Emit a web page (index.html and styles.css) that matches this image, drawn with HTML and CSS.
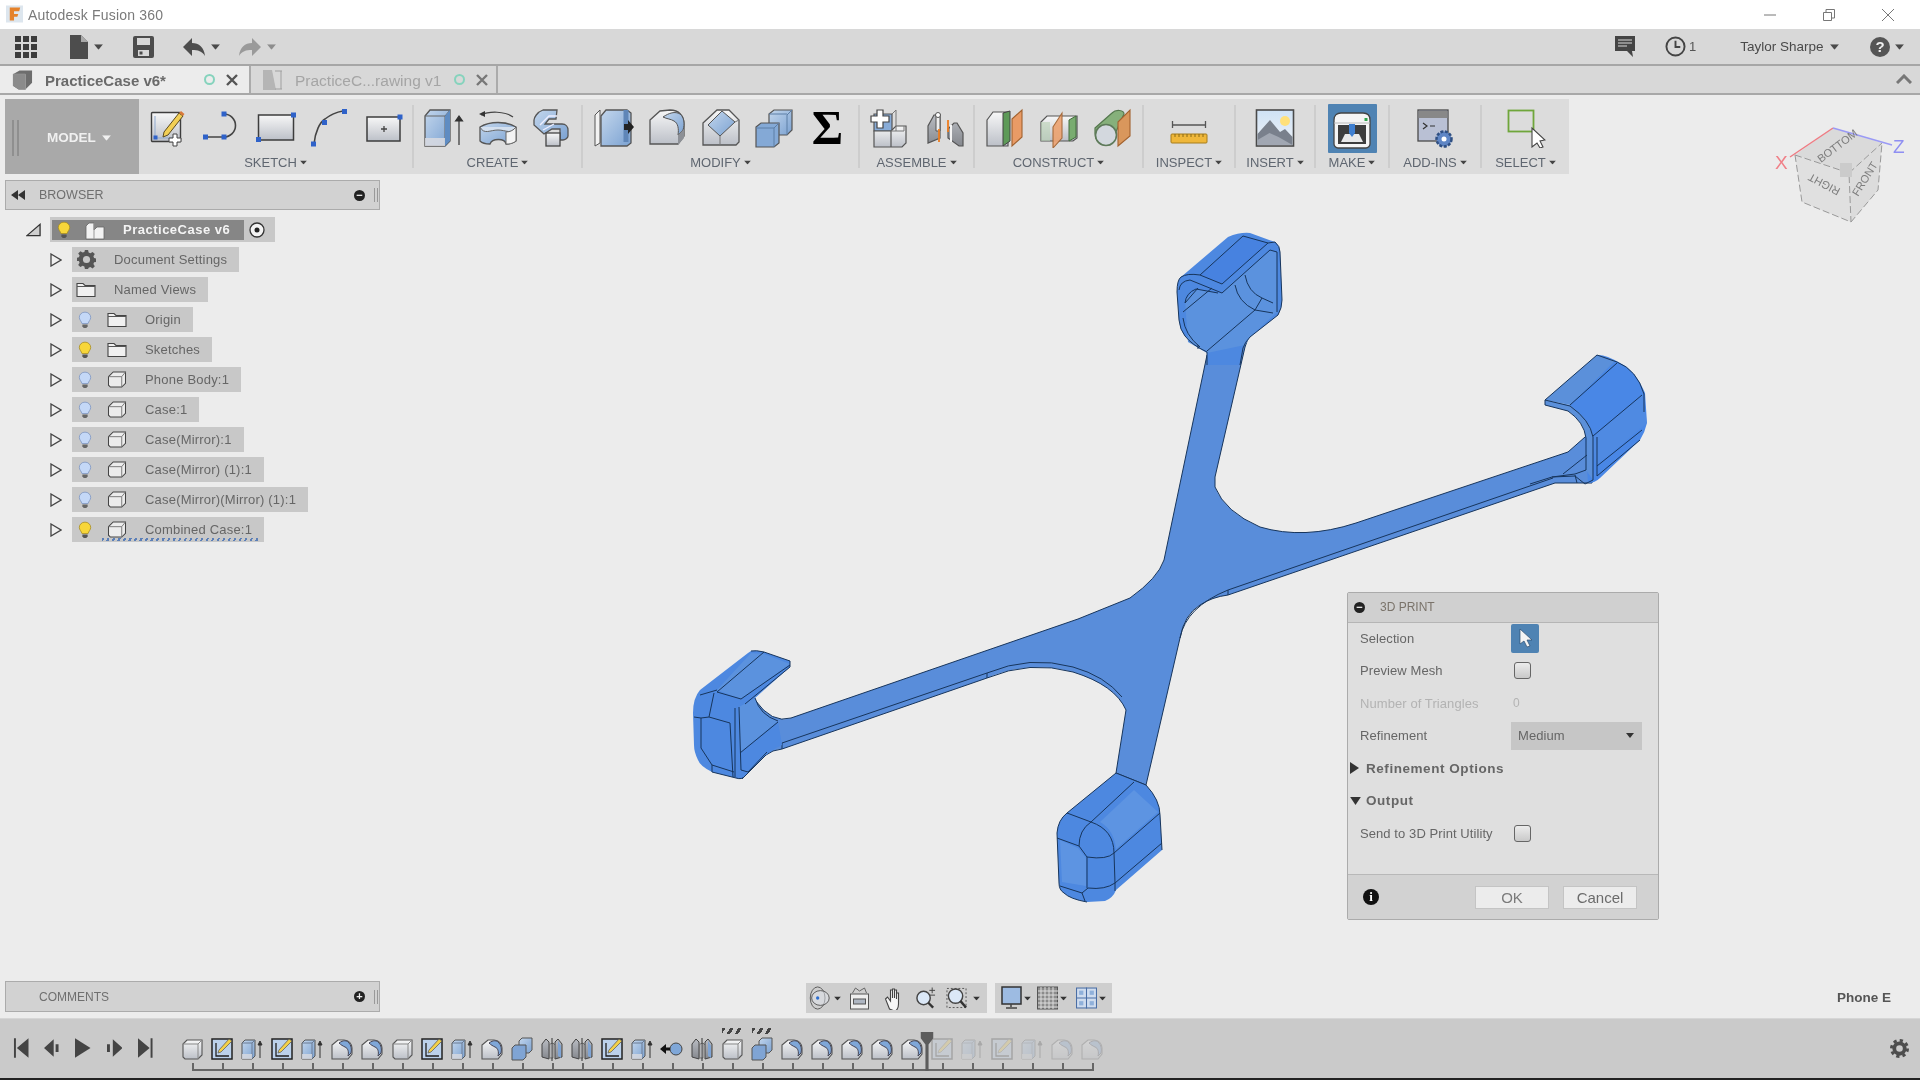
FILE: index.html
```html
<!DOCTYPE html>
<html lang="en">
<head>
<meta charset="utf-8">
<title>Autodesk Fusion 360</title>
<link rel="stylesheet" href="styles.css">
</head>
<body>
<svg class="defs" width="0" height="0" aria-hidden="true">
  <defs>
    <linearGradient id="gBlue" x1="0" y1="0" x2="1" y2="1"><stop offset="0" stop-color="#c3d6ec"/><stop offset="1" stop-color="#7ba2d2"/></linearGradient>
    <linearGradient id="gGrey" x1="0" y1="0" x2="0" y2="1"><stop offset="0" stop-color="#f7f7f7"/><stop offset="1" stop-color="#bcc0c8"/></linearGradient>
    <linearGradient id="gSide" x1="0" y1="0" x2="0" y2="1"><stop offset="0" stop-color="#b9bcc2"/><stop offset="1" stop-color="#85888e"/></linearGradient>
    <linearGradient id="gSky" x1="0" y1="0" x2="0" y2="1"><stop offset="0" stop-color="#cfe2f5"/><stop offset="1" stop-color="#eef2f7"/></linearGradient>

    <symbol id="i-sketch" viewBox="0 0 40 40">
      <rect x="3.5" y="4.5" width="29" height="29" rx="1" fill="url(#gGrey)" stroke="#3d3d3d" stroke-width="1.4"/>
      <path d="M7 8v22h22" fill="none" stroke="#8fa9cf" stroke-width="1"/>
      <rect x="5.5" y="27.5" width="4" height="4" fill="#2f62c9"/>
      <path d="M16 24l-1 5 5-2 15-19-4-3z" fill="#f2cf55" stroke="#5a4a20"/>
      <path d="M31 5l4 3 1.5-2-3.500-3z" fill="#d9793a"/>
      <path d="M25 26h4v4h4v4h-4v4h-4v-4h-4v-4h4z" fill="#fff" stroke="#444"/>
    </symbol>
    <symbol id="i-line" viewBox="0 0 40 40">
      <path d="M4 29h18a11.5 11.5 0 0 0 0-23" fill="none" stroke="#444" stroke-width="1.6"/>
      <g fill="#2f62c9"><rect x="1" y="26.5" width="5" height="5"/><rect x="19.5" y="26.5" width="5" height="5"/><rect x="19.5" y="3.5" width="5" height="5"/></g>
    </symbol>
    <symbol id="i-rect" viewBox="0 0 40 40">
      <rect x="2.5" y="7" width="35" height="25" fill="url(#gGrey)" stroke="#3d3d3d" stroke-width="1.5"/>
      <g fill="#2f62c9"><rect x="0" y="29" width="5" height="5"/><rect x="35" y="4.5" width="5" height="5"/></g>
    </symbol>
    <symbol id="i-arc" viewBox="0 0 40 40">
      <path d="M4 36c1-12 6-22 11-25 5-4 12-7 18-8" fill="none" stroke="#444" stroke-width="1.6"/>
      <g fill="#2f62c9"><rect x="1" y="33.5" width="5" height="5"/><rect x="12" y="12" width="5" height="5"/><rect x="32" y="1" width="5" height="5"/></g>
    </symbol>
    <symbol id="i-point" viewBox="0 0 40 40">
      <rect x="3" y="9" width="33" height="24" fill="url(#gGrey)" stroke="#3d3d3d" stroke-width="1.5"/>
      <path d="M17 21h6M20 18v6" stroke="#444" stroke-width="1.3"/>
      <rect x="33.5" y="6.5" width="5" height="5" fill="#2f62c9"/>
    </symbol>
    <symbol id="i-extrude" viewBox="0 0 40 40">
      <path d="M1 8l5-6h20v31l-5 5H1z" fill="url(#gBlue)" stroke="#555" stroke-width="1.3"/>
      <path d="M1 8h25M21 8v30M21 8l5-6" fill="none" stroke="#666"/>
      <path d="M21 8l5-6v31l-5 5z" fill="#5f8cc2"/>
      <rect x="1" y="30" width="20" height="8" fill="#d9dbe0" opacity=".85"/>
      <path d="M35 37V10M31.5 13l3.5-5 3.5 5z" fill="#333" stroke="#333" stroke-width="1.2"/>
    </symbol>
    <symbol id="i-revolve" viewBox="0 0 40 40">
      <path d="M3 7c8-4 24-4 32 2" fill="none" stroke="#444" stroke-width="1.2"/><path d="M1 6l6-3v6z" fill="#333"/>
      <path d="M2 19c10-6 26-6 36 0v14c-4 3-7 3-10 3-1-6-14-6-16 0-3 0-7 0-10-3z" fill="url(#gBlue)" stroke="#555" stroke-width="1.3"/>
      <path d="M2 19c4 8 10 3 18 3s14 5 18-3" fill="#d4e0ef" stroke="#666"/>
      <path d="M28 24c4 0 8-2 10-5v14c-4 3-7 3-10 3z" fill="#f3f3f3" stroke="#666"/>
    </symbol>
    <symbol id="i-sweep" viewBox="0 0 40 40">
      <path d="M3 12c0-2 3-8 9-10h14l-1 9h-7l-4 5h17c4 0 6 3 6 6v6c0 2-3 4-5 4h-3V21h-8l-8 5-10-9z" fill="url(#gBlue)" stroke="#555" stroke-width="1.3"/>
      <path d="M9 17l9-9h8M12 22l11-6" fill="none" stroke="#eef" stroke-width="1.4"/>
      <rect x="15" y="25" width="14" height="13" fill="url(#gGrey)" stroke="#444" stroke-width="1.3"/>
    </symbol>
    <symbol id="i-press" viewBox="0 0 40 40">
      <path d="M1 7l5-5v33l-5 3z" fill="#f2f2f2" stroke="#555"/>
      <path d="M7 8l5-6h21l4 3v30l-4 3H7z" fill="url(#gBlue)" stroke="#555" stroke-width="1.3"/>
      <path d="M32 2v32" stroke="#5f86b8" stroke-width="5"/>
      <path d="M30 16h4v-4l6 7-6 7v-4h-4z" fill="#222"/>
    </symbol>
    <symbol id="i-fillet" viewBox="0 0 40 40">
      <path d="M3 12L13 3l10-1c9 0 14 6 14 14v12l-6 8H3z" fill="url(#gGrey)" stroke="#555" stroke-width="1.3"/>
      <path d="M16 9c6-4 12-6 17-3 4 3 5 10 3 16l-5 5c1-6 0-12-4-14-3-2-7-2-11-4z" fill="url(#gBlue)" stroke="#555"/>
      <path d="M31 27l6-6v9l-6 7z" fill="#8d9096"/>
    </symbol>
    <symbol id="i-chamfer" viewBox="0 0 40 40">
      <path d="M2 15L16 2h12l10 10v22l-3 3H2z" fill="url(#gGrey)" stroke="#555" stroke-width="1.3"/>
      <path d="M7 17L21 3l13 11-15 14z" fill="url(#gBlue)" stroke="#555"/>
      <path d="M19 28v9M34 14l4-2" stroke="#777"/>
    </symbol>
    <symbol id="i-combine" viewBox="0 0 40 40">
      <path d="M15 6l5-4h18v20l-5 5h-18z" fill="url(#gBlue)" stroke="#555" stroke-width="1.2"/>
      <path d="M2 19l5-4h18v20l-5 4H2z" fill="#84a9d6" stroke="#555" stroke-width="1.2"/>
      <path d="M33 7v20M33 7l5-5M15 6h18M20 20v19M20 20l5-5M2 20h18" fill="none" stroke="#5d7ea6"/>
    </symbol>
    <symbol id="i-newcomp" viewBox="0 0 40 40">
      <path d="M5 6h18v17H5z" fill="#88acd8" stroke="#555" stroke-width="1.2"/>
      <path d="M5 23h17v16H5zM22 23l5-5h10v17l-4 4H22z" fill="url(#gGrey)" stroke="#555" stroke-width="1.2"/>
      <path d="M23 6l4-4v21M22 23h13v-5" fill="none" stroke="#777"/>
      <path d="M8 2h6v6h6v6h-6v6H8v-6H2V8h6z" fill="#fff" stroke="#444" stroke-width="1.2"/>
    </symbol>
    <symbol id="i-joint" viewBox="0 0 40 40">
      <path d="M4 35V18l6-11h6v23zM24 21l6-6 3 0 6 10v13l-4 0-11-8z" fill="url(#gSide)" stroke="#555" stroke-width="1.2"/>
      <path d="M12 6h4v17h-4z" fill="#eee" stroke="#555"/><circle cx="14" cy="7" r="2.5" fill="#fff" stroke="#555"/>
      <path d="M15 34V21M24 24v-12" stroke="#ee7d1f" stroke-width="1.8"/>
      <path d="M27 17v17" stroke="#f4f4f4" stroke-width="2"/>
    </symbol>
    <symbol id="i-offset" viewBox="0 0 40 40">
      <path d="M2 12l6-8h15v34H2z" fill="url(#gGrey)" stroke="#555" stroke-width="1.2"/>
      <path d="M18 5l7-2v30l-7 5z" fill="#5d9a58" stroke="#444"/>
      <path d="M27 11l10-9v27l-10 9z" fill="#e99b66" stroke="#a2622f" stroke-width="1.1"/>
    </symbol>
    <symbol id="i-mid" viewBox="0 0 40 40">
      <path d="M2 14l6-6h30v22l-4 3H2z" fill="url(#gGrey)" stroke="#555" stroke-width="1.2"/>
      <path d="M30 12l7-4v21l-7 4z" fill="#79ac70" stroke="#436d3c"/><path d="M2 14h9v19H2z" fill="#b9d2b4" opacity=".6"/>
      <path d="M14 19l9-14v25l-9 10z" fill="#eca373" stroke="#a2622f" stroke-width="1.1" opacity=".92"/>
    </symbol>
    <symbol id="i-tan" viewBox="0 0 40 40">
      <path d="M3 20L20 5c4-4 12-3 12 1L18 37H13C6 37 3 31 3 25z" fill="#86b07b" stroke="#55784e" stroke-width="1.2"/>
      <circle cx="14" cy="27" r="10.5" fill="#d3d8de" stroke="#5e7a5a" stroke-width="1.6"/>
      <path d="M26 14l12-12v26L26 38z" fill="#d9975c" stroke="#a2622f" stroke-width="1.1"/>
    </symbol>
    <symbol id="i-ruler" viewBox="0 0 40 40">
      <path d="M3 17h34M3.5 13v7M36.5 13v7" stroke="#555" stroke-width="1.3"/>
      <rect x="2" y="26" width="36" height="9" rx="1" fill="#efb73a" stroke="#a67c1a"/>
      <path d="M6 26v3M10 26v3M14 26v3M18 26v3M22 26v3M26 26v3M30 26v3M34 26v3" stroke="#8a6a14"/>
    </symbol>
    <symbol id="i-insert" viewBox="0 0 40 40">
      <rect x="1.5" y="2" width="37" height="36" fill="url(#gSky)" stroke="#4a4a4a" stroke-width="1.6"/>
      <circle cx="30" cy="13" r="5" fill="#ffe07a"/>
      <path d="M2.5 37V26L15 12l10 12 5-3 7.5 8v8z" fill="#79808c"/><path d="M2.5 37v-5l12-7 9 4 14 8z" fill="#a1a7b2"/>
    </symbol>
    <symbol id="i-make" viewBox="0 0 40 40">
      <path d="M2 11c0-5 3-7 7-7h22c4 0 7 2 7 7v24c0 2-2 4-4 4H6c-2 0-4-2-4-4z" fill="#f5f5f5" stroke="#444" stroke-width="1.3"/>
      <path d="M2 14h36" stroke="#bbb"/><rect x="32.5" y="9" width="3" height="3" fill="#2fa34a"/>
      <rect x="6" y="16" width="28" height="19" fill="#3d3d3d"/>
      <path d="M9 33l4-8h14l4 8z" fill="#e9e9e9"/>
      <path d="M17 15h6v9l-3 4-3-4z" fill="#3f7fd0"/>
    </symbol>
    <symbol id="i-addins" viewBox="0 0 40 40">
      <rect x="3" y="2" width="30" height="31" fill="#b9c0d4" stroke="#4a4a4a" stroke-width="1.3"/>
      <rect x="3.5" y="3" width="29" height="7" fill="#888"/>
      <path d="M8 15l4 3-4 3M15 18h5" fill="none" stroke="#333" stroke-width="1.2"/>
      <circle cx="29" cy="31" r="7.5" fill="#5f86c5" stroke="#2f4f82" stroke-width="2.5" stroke-dasharray="3 1.5"/>
      <circle cx="29" cy="31" r="2.5" fill="#fff"/>
    </symbol>
    <symbol id="i-select" viewBox="0 0 40 40">
      <rect x="2.5" y="2.5" width="25" height="21" fill="none" stroke="#6fa63b" stroke-width="1.8"/>
      <path d="M26 20v19l5-4 3 5 3-1-3-6 5-1z" fill="#fff" stroke="#444" stroke-width="1.1"/>
    </symbol>

    <symbol id="t-cube" viewBox="0 0 24 24">
      <path d="M3 7l4-4h15v15l-4 4H5l-2-2z" fill="url(#gGrey)" stroke="#555" stroke-width="1.1"/>
      <path d="M3 7h15v15M18 7l4-4" fill="none" stroke="#888"/>
    </symbol>
    <symbol id="t-sketch" viewBox="0 0 24 24">
      <rect x="2" y="2" width="20" height="20" fill="#bcd2ec" stroke="#222" stroke-width="1.5"/>
      <path d="M6 6v13h13" fill="none" stroke="#222" stroke-width="1.3"/>
      <path d="M8 16l1-3 10-11 3 2-11 11z" fill="#f4d14a" stroke="#555" stroke-width=".7"/>
    </symbol>
    <symbol id="t-extrude" viewBox="0 0 24 24">
      <path d="M2 6l3-3h10v16l-3 3H2z" fill="url(#gBlue)" stroke="#555"/>
      <path d="M2 6h10v16M12 6l3-3" fill="none" stroke="#6a7a92"/>
      <rect x="2" y="17" width="10" height="5" fill="#d9dbe0" opacity=".8"/>
      <path d="M20 21V6M18 8l2-4 2 4z" fill="#333" stroke="#333"/>
    </symbol>
    <symbol id="t-fillet" viewBox="0 0 24 24">
      <path d="M2 8l6-5h6c5 0 8 4 8 8v6l-4 5H2z" fill="url(#gGrey)" stroke="#555" stroke-width="1.1"/>
      <path d="M9 6c4-3 8-3 10 0 2 2 3 6 2 10l-3 3c1-4 0-8-3-9-2-1-4-2-6-4z" fill="#7fa7d8" stroke="#445"/>
    </symbol>
    <symbol id="t-combine" viewBox="0 0 24 24">
      <path d="M9 4l3-3h10v12l-3 3H9z" fill="url(#gBlue)" stroke="#555"/>
      <path d="M2 11l3-3h11v12l-3 3H2z" fill="#7fa4d4" stroke="#555"/>
    </symbol>
    <symbol id="t-mirror" viewBox="0 0 24 24">
      <path d="M2 20V7l4-5 3 3v17zM22 20V7l-4-5-3 3v17z" fill="url(#gSide)" stroke="#444"/>
      <path d="M10 7l3-1v15h-3zM15 8l-2-2" fill="#e8eaee" stroke="#555" stroke-width=".7"/>
      <path d="M12 1v23" stroke="#333"/>
      <path d="M18 4l3 5v12l-3-2z" fill="#7fa4d4"/>
    </symbol>
    <symbol id="t-joint" viewBox="0 0 24 24">
      <circle cx="16" cy="12" r="6" fill="#7fa7d8" stroke="#444"/>
      <path d="M10 10.5H6V7L0 12l6 5v-3.5h4z" fill="#111"/>
    </symbol>
    <symbol id="q-arrow" viewBox="0 0 10 6"><path d="M0 0h10L5 6z" fill="currentColor"/></symbol>
    <symbol id="b-on" viewBox="0 0 16 20">
      <path d="M8 1c4 0 6.500 3 6.500 6 0 3-2.500 4.500-3 7h-7c-.5-2.500-3-4-3-7 0-3 2.500-6 6.500-6z" fill="#f7d63a" stroke="#a88d1e" stroke-width=".9"/>
      <path d="M5 15h6v2l-1.500 2h-3L5 17z" fill="#555"/>
    </symbol>
    <symbol id="b-off" viewBox="0 0 16 20">
      <path d="M8 1c4 0 6.500 3 6.500 6 0 3-2.500 4.500-3 7h-7c-.5-2.500-3-4-3-7 0-3 2.500-6 6.500-6z" fill="#c4d8f7" stroke="#7d95c2" stroke-width=".9"/>
      <path d="M5 15h6v2l-1.500 2h-3L5 17z" fill="#666"/>
    </symbol>
    <symbol id="n-folder" viewBox="0 0 20 16"><path d="M1 15V2h6l2 2h10v11z" fill="#f0f0f0" stroke="#444" stroke-width="1.1"/><path d="M1 5h18" stroke="#555"/></symbol>
    <symbol id="n-body" viewBox="0 0 20 18"><path d="M1 6l5-5h13v12l-4 4H3l-2-2z" fill="#ececec" stroke="#444" stroke-width="1.1"/><path d="M1 6h14v11M15 6l4-5" fill="none" stroke="#777"/></symbol>
    <symbol id="n-tri" viewBox="0 0 12 14"><path d="M1 1l10 6-10 6z" fill="#f0f0f0" stroke="#444" stroke-width="1.3"/></symbol>
  </defs>
</svg>

<div class="app">
  <header class="titlebar">
    <svg class="logo" viewBox="0 0 18 18"><rect width="18" height="18" fill="#dde6ee"/><path d="M4 2h11l-1 4H8.500v3H13l-1 3H8.500v4H4z" fill="#e5822b"/></svg>
    <span class="apptitle">Autodesk Fusion 360</span>
    <div class="winctl">
      <svg viewBox="0 0 14 14"><path d="M1 7h12" stroke="#777"/></svg>
      <svg viewBox="0 0 14 14"><path d="M1.500 4.500h8v8h-8zM4 4V1.500h8.500V10H10" fill="none" stroke="#777"/></svg>
      <svg viewBox="0 0 14 14"><path d="M1 1l12 12M13 1L1 13" stroke="#777"/></svg>
    </div>
  </header>

  <nav class="quickbar">
    <svg class="q-grid" viewBox="0 0 22 22"><path d="M0 0h6v6H0zM8 0h6v6H8zM16 0h6v6h-6zM0 8h6v6H0zM8 8h6v6H8zM16 8h6v6h-6zM0 16h6v6H0zM8 16h6v6H8zM16 16h6v6h-6z" fill="#3c3c3c"/></svg>
    <svg class="q-file" viewBox="0 0 18 24"><path d="M0 0h11l7 7v17H0z" fill="#4d4d4d"/><path d="M11 0l7 7h-7z" fill="#aaa"/></svg>
    <svg class="q-arr" viewBox="0 0 10 6"><use href="#q-arrow"/></svg>
    <svg class="q-save" viewBox="0 0 21 22"><path d="M0 2q0-2 2-2h17q2 0 2 2v18q0 2-2 2H2q-2 0-2-2z" fill="#4d4d4d"/><rect x="4" y="2" width="13" height="7" fill="#d8d8d8"/><rect x="5" y="14" width="11" height="6" fill="#d8d8d8"/><rect x="6.500" y="15.500" width="3" height="3" fill="#4d4d4d"/></svg>
    <svg class="q-undo" viewBox="0 0 22 18"><path d="M9 0v5c7 0 12 4 13 13-3-5-7-6-13-6v6L0 9z" fill="#4d4d4d"/></svg>
    <svg class="q-arr" viewBox="0 0 10 6"><use href="#q-arrow"/></svg>
    <svg class="q-redo" viewBox="0 0 22 18"><path d="M13 0v5C6 5 1 9 0 18c3-5 7-6 13-6v6l9-9z" fill="#9a9a9a"/></svg>
    <svg class="q-arr q-arr-off" viewBox="0 0 10 6"><use href="#q-arrow"/></svg>
    <div class="q-right">
      <svg class="q-chat" viewBox="0 0 20 21"><path d="M0 0h20v15h-3l1 6-6-6H0z" fill="#444"/><path d="M3 4h14M3 7h14M3 10h9" stroke="#d8d8d8"/></svg>
      <svg class="q-clock" viewBox="0 0 22 22"><circle cx="11" cy="11" r="9.500" fill="none" stroke="#444" stroke-width="2"/><path d="M11 5v6.500h5" fill="none" stroke="#444" stroke-width="2"/></svg>
      <span class="q-count">1</span>
      <span class="q-user">Taylor Sharpe</span>
      <svg class="q-arr q-arr-user" viewBox="0 0 10 6"><use href="#q-arrow"/></svg>
      <span class="q-help">?</span>
      <svg class="q-arr q-arr-last" viewBox="0 0 10 6"><use href="#q-arrow"/></svg>
    </div>
  </nav>

  <div class="tabs">
    <div class="tab tab-on">
      <svg class="tab-ico" viewBox="0 0 22 20"><path d="M1 4l7-4h13v13l-7 7H7l-6-4z" fill="#6d6d6d"/><path d="M1 4h13v16" fill="none" stroke="#a9a9a9"/><path d="M1 4h13v16H7l-6-4z" fill="#8b8b8b"/></svg>
      <span class="tab-name">PracticeCase v6*</span>
      <span class="tab-dot"></span>
      <svg class="tab-x" viewBox="0 0 12 12"><path d="M1 1l10 10M11 1L1 11" stroke="#555" stroke-width="2.400"/></svg>
    </div>
    <div class="tab tab-off">
      <svg class="tab-ico2" viewBox="0 0 20 20"><path d="M0 0h9l4 20H0z" fill="#b5b5b5"/><path d="M12 1h7M18 1v18M12 19h7" stroke="#a0a0a0"/></svg>
      <span class="tab-name">PracticeC...rawing v1</span>
      <span class="tab-dot"></span>
      <svg class="tab-x" viewBox="0 0 12 12"><path d="M1 1l10 10M11 1L1 11" stroke="#777" stroke-width="2.400"/></svg>
    </div>
    <svg class="tab-caret" viewBox="0 0 16 10"><path d="M1 9l7-7 7 7" fill="none" stroke="#777" stroke-width="3"/></svg>
  </div>

  <main class="work">
    <svg class="model" viewBox="0 0 1920 985" aria-hidden="true">
      <g transform="translate(0 -95)">
        <g fill="#598dda" stroke="#17355c" stroke-width="1" stroke-linejoin="round">
          <path d="M1207 355L1164 560Q1158 578 1130 598L1078 619L791 718Q772 724 755 700L742 779L766 755Q772 750 782 749L987 678Q1030 660 1073 672Q1115 685 1126 710L1116 773L1146 785L1180 638Q1184 615 1200 605Q1212 597 1228 595L1555 483L1592 483L1592 441L1585 437L1568 452L1356 523Q1304 540 1260 527Q1225 512 1215 487L1215 477L1245 347L1250 333z"/>
        </g>
        <g fill="none" stroke="#17355c" stroke-width="1">
          <path d="M1228 590L1553 478M782 743L987 673Q1030 655 1073 667Q1105 676 1122 697M1180 638Q1186 607 1228 590M1228 590v5M987 673v5M782 743v6"/>
        </g>

        <path fill="#4d88e0" d="M1207 365V352Q1192 345 1185 336Q1180 330 1179 320L1177 292Q1177 280 1181 277L1228 237Q1240 232 1250 233L1275 242Q1280 246 1280 252L1282 300Q1282 308 1278 315L1250 337Q1245 342 1243 348L1240 365z"/>
        <path fill="#5b92de" d="M1185 300L1196 289L1218 293L1222 293L1270 250L1277 252L1277 312L1250 337L1245 345L1207 353L1188 342z"/>
        <path fill="#4782e0" d="M1200 275L1243 236L1268 243L1222 284z"/>
        <path fill="none" stroke="#17355c" stroke-width="1" d="M1207 365V352Q1192 345 1185 336Q1180 330 1179 320L1177 292Q1177 280 1181 277Q1187 273 1200 275L1222 284L1268 243L1275 242Q1280 246 1280 252L1282 300Q1282 308 1278 315L1250 337Q1245 342 1243 348L1240 365M1179 290Q1180 281 1190 280L1222 293L1270 250L1277 252L1277 312M1200 275L1243 236L1268 243M1185 303Q1186 293 1196 289L1218 293M1183 312L1212 288M1185 303L1198 288M1207 351L1255 310L1273 313M1235 285Q1238 302 1255 310M1245 275Q1248 292 1262 298L1273 303M1262 298L1255 310M1183 318Q1185 335 1200 347M1198 345V349"/>

        <path fill="#4987e6" d="M1570 405L1597 355Q1605 354 1620 363Q1635 370 1645 393L1647 423Q1645 432 1640 440L1600 478Q1595 483 1588 483L1585 437Q1588 418 1570 409z"/>
        <path fill="#5b90da" d="M1545 400L1597 355L1615 361L1570 405z"/>
        <path fill="#5b90da" d="M1545 400L1570 405Q1592 422 1593 437V480L1586 470V438Q1584 422 1568 411L1545 405z"/>
        <path fill="#5b90da" d="M1592 438L1642 395L1647 423L1596 466z" opacity=".35"/>
        <path fill="none" stroke="#17355c" stroke-width="1" d="M1545 405V400L1597 355L1617 362Q1637 370 1644 394V412M1617 363L1570 405M1545 400L1570 406Q1590 420 1593 437V480L1585 484L1575 476L1552 477L1530 484M1545 405L1568 411Q1584 422 1586 438V470L1575 474L1552 477M1593 436L1642 395M1597 466L1642 430M1597 437V476M1563 474L1587 455M1575 475L1577 483M1597 476L1640 440"/>

        <path fill="#4d88e0" d="M751 651Q756 650 764 652L790 661V667L755 698Q760 715 778 721L782 745Q772 750 766 755L745 776Q742 780 736 778L712 772Q700 766 698 760Q694 752 694 745L693 713Q693 698 700 690L748 653z"/>
        <path fill="#5b92de" d="M739 707L755 698Q760 715 778 721L740 753zM717 690L751 653L764 654L790 664L741 699z"/>
        <path fill="none" stroke="#17355c" stroke-width="1" d="M751 651Q756 650 764 652L790 661V667L745 704M790 665L741 699L717 692M717 692L764 652M717 690L700 695M714 693L709 717L730 723M701 718L694 717M709 717L701 718V748L712 765L734 772M730 723L733 777M735 708V777M739 707L741 770L748 772L767 752M740 753L778 722M755 698Q760 715 778 721M766 755L745 776Q742 780 736 778L712 772M712 765V772"/>

        <path fill="#4d88e0" d="M1116 773L1146 785Q1160 800 1160 815L1162 850L1116 890Q1113 898 1105 901L1087 902Q1070 899 1064 893Q1059 890 1059 883L1057 833Q1058 820 1067 813z"/>
        <path fill="#5d94e2" d="M1060 840L1078 848L1086 858V886L1062 882zM1134 790L1158 812L1116 849Q1114 830 1100 822z"/>
        <path fill="none" stroke="#17355c" stroke-width="1" d="M1116 773L1146 785Q1160 800 1160 815L1162 850M1116 773L1067 813Q1058 820 1057 833L1059 883Q1059 890 1064 893Q1070 899 1087 902M1067 813L1091 822L1134 782M1091 822Q1114 830 1114 853Q1107 860 1087 857L1079 846Q1079 830 1091 822M1114 853L1160 813M1057 838L1079 846M1087 857V888M1114 853L1115 883L1162 843M1088 888Q1105 890 1115 883M1060 886L1082 893L1088 888M1082 893L1085 901M1115 883V891"/>
      </g>
    </svg>

    <section class="ribbon">
      <div class="model-btn"><span class="grip"></span><span class="model-label">MODEL</span><svg class="arr-w" viewBox="0 0 10 6"><use href="#q-arrow"/></svg></div>
      <div class="rg rg-sketch">
        <div class="rg-icons"><svg class="ri"><use href="#i-sketch"/></svg><svg class="ri"><use href="#i-line"/></svg><svg class="ri"><use href="#i-rect"/></svg><svg class="ri"><use href="#i-arc"/></svg><svg class="ri"><use href="#i-point"/></svg></div>
        <div class="rg-label">SKETCH<svg class="arr" viewBox="0 0 10 6"><use href="#q-arrow"/></svg></div>
      </div><i class="sep"></i>
      <div class="rg rg-create">
        <div class="rg-icons"><svg class="ri"><use href="#i-extrude"/></svg><svg class="ri"><use href="#i-revolve"/></svg><svg class="ri"><use href="#i-sweep"/></svg></div>
        <div class="rg-label">CREATE<svg class="arr" viewBox="0 0 10 6"><use href="#q-arrow"/></svg></div>
      </div><i class="sep"></i>
      <div class="rg rg-modify">
        <div class="rg-icons"><svg class="ri"><use href="#i-press"/></svg><svg class="ri"><use href="#i-fillet"/></svg><svg class="ri"><use href="#i-chamfer"/></svg><svg class="ri"><use href="#i-combine"/></svg><span class="sigma">Σ</span></div>
        <div class="rg-label">MODIFY<svg class="arr" viewBox="0 0 10 6"><use href="#q-arrow"/></svg></div>
      </div><i class="sep"></i>
      <div class="rg rg-assemble">
        <div class="rg-icons"><svg class="ri"><use href="#i-newcomp"/></svg><svg class="ri"><use href="#i-joint"/></svg></div>
        <div class="rg-label">ASSEMBLE<svg class="arr" viewBox="0 0 10 6"><use href="#q-arrow"/></svg></div>
      </div><i class="sep"></i>
      <div class="rg rg-construct">
        <div class="rg-icons"><svg class="ri"><use href="#i-offset"/></svg><svg class="ri"><use href="#i-mid"/></svg><svg class="ri"><use href="#i-tan"/></svg></div>
        <div class="rg-label">CONSTRUCT<svg class="arr" viewBox="0 0 10 6"><use href="#q-arrow"/></svg></div>
      </div><i class="sep"></i>
      <div class="rg rg-inspect">
        <div class="rg-icons"><svg class="ri"><use href="#i-ruler"/></svg></div>
        <div class="rg-label">INSPECT<svg class="arr" viewBox="0 0 10 6"><use href="#q-arrow"/></svg></div>
      </div><i class="sep"></i>
      <div class="rg rg-insert">
        <div class="rg-icons"><svg class="ri"><use href="#i-insert"/></svg></div>
        <div class="rg-label">INSERT<svg class="arr" viewBox="0 0 10 6"><use href="#q-arrow"/></svg></div>
      </div><i class="sep"></i>
      <div class="rg rg-make">
        <div class="rg-icons rg-active"><svg class="ri"><use href="#i-make"/></svg></div>
        <div class="rg-label">MAKE<svg class="arr" viewBox="0 0 10 6"><use href="#q-arrow"/></svg></div>
      </div><i class="sep"></i>
      <div class="rg rg-addins">
        <div class="rg-icons"><svg class="ri"><use href="#i-addins"/></svg></div>
        <div class="rg-label">ADD-INS<svg class="arr" viewBox="0 0 10 6"><use href="#q-arrow"/></svg></div>
      </div><i class="sep"></i>
      <div class="rg rg-select">
        <div class="rg-icons"><svg class="ri"><use href="#i-select"/></svg></div>
        <div class="rg-label">SELECT<svg class="arr" viewBox="0 0 10 6"><use href="#q-arrow"/></svg></div>
      </div>
    </section>

    <div class="side">
      <div class="pane-head">
        <svg class="rew" viewBox="0 0 14 10"><path d="M7 0v10L0 5zM14 0v10L7 5z" fill="#333"/></svg>
        <span class="pane-title">BROWSER</span>
        <span class="pane-round">−</span><i class="pane-grip"></i>
      </div>
      <ul class="tree">
        <li class="node root">
          <svg class="tw-root" viewBox="0 0 16 14"><path d="M1 13L15 1v12z" fill="#cfcfcf" stroke="#333" stroke-width="1.4"/></svg>
          <div class="lab-root">
            <div class="lab-root-in">
              <svg class="bulb" viewBox="0 0 16 20"><use href="#b-on"/></svg>
              <svg class="comp" viewBox="0 0 20 20"><path d="M1 19V6l3-3h5v7l3-3h7v12H1z" fill="#f2f2f2" stroke="#666" stroke-width=".8"/><path d="M9 3v16" stroke="#999"/></svg>
              <span>PracticeCase v6</span>
            </div>
            <svg class="radio" viewBox="0 0 16 16"><circle cx="8" cy="8" r="7" fill="#f3f3f3" stroke="#333" stroke-width="1.3"/><circle cx="8" cy="8" r="2.5" fill="#222"/></svg>
          </div>
        </li>
        <li class="node"><svg class="tw"><use href="#n-tri"/></svg><div class="lab"><svg class="gear" viewBox="0 0 24 24"><path d="M10 0h4l.7 3.300 2.200.9L19.700 2.400l2.800 2.800-1.800 2.800.9 2.200 3.300.7v4l-3.300.7-.9 2.200 1.800 2.800-2.800 2.800-2.800-1.800-2.200.9L14 24h-4l-.7-3.300-2.200-.9-2.800 1.800-2.800-2.800 1.800-2.800-.9-2.200L-.9 14v-4l3.300-.7.9-2.200L1.500 4.300l2.800-2.800 2.800 1.800 2.200-.9z" fill="#555"/><circle cx="12" cy="12" r="4.500" fill="#c8c8c8"/></svg><span class="txt-a">Document Settings</span></div></li>
        <li class="node"><svg class="tw"><use href="#n-tri"/></svg><div class="lab"><svg class="fold fold-a"><use href="#n-folder"/></svg><span class="txt-a">Named Views</span></div></li>
        <li class="node"><svg class="tw"><use href="#n-tri"/></svg><div class="lab"><svg class="bulb"><use href="#b-off"/></svg><svg class="fold"><use href="#n-folder"/></svg><span class="txt">Origin</span></div></li>
        <li class="node"><svg class="tw"><use href="#n-tri"/></svg><div class="lab"><svg class="bulb"><use href="#b-on"/></svg><svg class="fold"><use href="#n-folder"/></svg><span class="txt">Sketches</span></div></li>
        <li class="node"><svg class="tw"><use href="#n-tri"/></svg><div class="lab"><svg class="bulb"><use href="#b-off"/></svg><svg class="fold"><use href="#n-body"/></svg><span class="txt">Phone Body:1</span></div></li>
        <li class="node"><svg class="tw"><use href="#n-tri"/></svg><div class="lab"><svg class="bulb"><use href="#b-off"/></svg><svg class="fold"><use href="#n-body"/></svg><span class="txt">Case:1</span></div></li>
        <li class="node"><svg class="tw"><use href="#n-tri"/></svg><div class="lab"><svg class="bulb"><use href="#b-off"/></svg><svg class="fold"><use href="#n-body"/></svg><span class="txt">Case(Mirror):1</span></div></li>
        <li class="node"><svg class="tw"><use href="#n-tri"/></svg><div class="lab"><svg class="bulb"><use href="#b-off"/></svg><svg class="fold"><use href="#n-body"/></svg><span class="txt">Case(Mirror) (1):1</span></div></li>
        <li class="node"><svg class="tw"><use href="#n-tri"/></svg><div class="lab"><svg class="bulb"><use href="#b-off"/></svg><svg class="fold"><use href="#n-body"/></svg><span class="txt">Case(Mirror)(Mirror) (1):1</span></div></li>
        <li class="node"><svg class="tw"><use href="#n-tri"/></svg><div class="lab lab-warn"><svg class="bulb"><use href="#b-on"/></svg><svg class="fold"><use href="#n-body"/></svg><span class="txt">Combined Case:1</span><i class="squiggle"></i></div></li>
      </ul>
      <div class="pane-head pane-comments">
        <span class="pane-title">COMMENTS</span>
        <span class="pane-round">+</span><i class="pane-grip"></i>
      </div>
    </div>

    <svg class="cube" viewBox="0 0 150 110" aria-hidden="true">
      <g transform="translate(-1770 -120)">
        <path d="M1795 155L1833 128L1882 143L1849 173z" fill="#dadada"/>
        <path d="M1795 155L1849 173L1851 222L1802 202z" fill="#e0e0e0"/>
        <path d="M1849 173L1882 143L1878 190L1851 222z" fill="#dcdcdc"/>
        <path d="M1795 155L1802 202L1851 222L1878 190L1882 143M1795 155L1849 173L1851 222M1849 173L1882 143" fill="none" stroke="#999" stroke-dasharray="7 3"/>
        <rect x="1840" y="163" width="12" height="14" fill="#cbcbcb"/>
        <path d="M1790 157L1833 128" stroke="#ef7b83" stroke-width="1.5"/>
        <path d="M1833 128L1892 145" stroke="#9a9af5" stroke-width="1.5"/>
        <text class="cube-x" x="1775" y="169">X</text>
        <text class="cube-z" x="1893" y="153">Z</text>
        <text class="cube-t" transform="translate(1821 163) rotate(-37)">BOTTOM</text>
        <text class="cube-t" transform="translate(1841 189) rotate(208)">RIGHT</text>
        <text class="cube-t" transform="translate(1858 197) rotate(-58)">FRONT</text>
      </g>
    </svg>

    <aside class="print">
      <div class="print-head"><span class="pane-round">−</span><span class="print-title">3D PRINT</span></div>
      <div class="print-body">
        <div class="row"><span class="rl">Selection</span><span class="sel-btn"><svg viewBox="0 0 14 20"><path d="M2 1v15l4-3 3 6 3-1-3-6h5z" fill="#f4f4f4" stroke="#2d4e70" stroke-width=".7"/></svg></span></div>
        <div class="row"><span class="rl">Preview Mesh</span><span class="chk"></span></div>
        <div class="row row-off"><span class="rl">Number of Triangles</span><span class="rv">0</span></div>
        <div class="row"><span class="rl">Refinement</span><span class="drop">Medium<svg class="arr-d" viewBox="0 0 10 6"><use href="#q-arrow"/></svg></span></div>
        <div class="grp"><svg class="grp-arr" viewBox="0 0 9 12"><path d="M0 0l9 6-9 6z" fill="#333"/></svg><b>Refinement Options</b></div>
        <div class="grp"><svg class="grp-arr grp-down" viewBox="0 0 12 9"><path d="M0 0h12L6 9z" fill="#333"/></svg><b>Output</b></div>
        <div class="row"><span class="rl">Send to 3D Print Utility</span><span class="chk"></span></div>
      </div>
      <div class="print-foot">
        <span class="info">i</span>
        <span class="btn btn-ok">OK</span>
        <span class="btn">Cancel</span>
      </div>
    </aside>

    <div class="navbar">
      <div class="nav-group">
        <svg class="nv" viewBox="0 0 22 26"><ellipse cx="9" cy="13" rx="8" ry="12" fill="none" stroke="#555"/><ellipse cx="12" cy="13" rx="9.5" ry="8" fill="#dfe4ec" fill-opacity=".5" stroke="#555"/><circle cx="9" cy="13" r="1.8" fill="#2d6fd0"/></svg>
        <svg class="nv-a nv-a-wide" viewBox="0 0 10 6"><use href="#q-arrow"/></svg>
        <svg class="nv" viewBox="0 0 20 24"><rect x="1" y="8" width="18" height="15" fill="#eee" stroke="#555"/><rect x="4" y="13" width="12" height="5" fill="#aeb6c2" stroke="#555"/><path d="M3 7l3-5 4 3 5-3 2 5" fill="none" stroke="#666"/></svg>
        <svg class="nv nv-pan" viewBox="0 0 20 24"><path d="M5 23L1 13l2-2 3 4V4h2v8-9h2v9-8h2v9-6h2v11c0 4-2 7-4 7z" fill="#f5f5f5" stroke="#444" stroke-width="1.1"/></svg>
        <svg class="nv nv-zoom" viewBox="0 0 22 24"><circle cx="9" cy="12" r="7" fill="#dbe8f7" stroke="#444" stroke-width="1.5"/><path d="M14 17l5 5" stroke="#333" stroke-width="2.5"/><path d="M15 4h6M18 1v6M15 9h6" stroke="#444"/></svg>
        <svg class="nv nv-zoom" viewBox="0 0 22 24"><rect x="1" y="2" width="20" height="20" fill="none" stroke="#555" stroke-dasharray="2 2"/><circle cx="10" cy="10" r="7.5" fill="#dbe8f7" stroke="#444" stroke-width="1.5"/><path d="M15 15l6 7" stroke="#333" stroke-width="2.5"/></svg>
        <svg class="nv-a nv-a-last" viewBox="0 0 10 6"><use href="#q-arrow"/></svg>
      </div>
      <div class="nav-group nav-b">
        <svg class="nv" viewBox="0 0 21 24"><rect x="1" y="1" width="19" height="17" fill="#9dbbe2" stroke="#333" stroke-width="1.5"/><path d="M10 18v3M5 22h11" stroke="#444" stroke-width="1.5"/></svg>
        <svg class="nv-a nv-a-b1" viewBox="0 0 10 6"><use href="#q-arrow"/></svg>
        <svg class="nv" viewBox="0 0 21 24"><rect x=".5" y="1" width="20" height="22" fill="#8b8b8b" stroke="#555"/><path d="M4 1v22M8 1v22M12 1v22M16 1v22M1 5h20M1 9h20M1 13h20M1 17h20M1 21h20" stroke="#ddd"/></svg>
        <svg class="nv-a nv-a-b2" viewBox="0 0 10 6"><use href="#q-arrow"/></svg>
        <svg class="nv" viewBox="0 0 20 20"><rect x=".5" y=".5" width="19" height="19" fill="#cfdcee" stroke="#4a6ea5"/><path d="M10 0v20M0 10h20" stroke="#4a6ea5"/><rect x="3" y="3" width="4" height="4" fill="#8fb0da"/><rect x="13" y="3" width="4" height="4" fill="#8fb0da"/><rect x="3" y="13" width="4" height="4" fill="#8fb0da"/><rect x="13" y="13" width="4" height="4" fill="#8fb0da"/></svg>
        <svg class="nv-a" viewBox="0 0 10 6"><use href="#q-arrow"/></svg>
      </div>
    </div>

    <span class="phone">Phone E</span>
  </main>

  <footer class="timeline">
    <div class="tl-ctrl">
      <svg viewBox="0 0 16 20"><path d="M1 0h2v20H1zM16 0v20L4 10z" fill="#444"/></svg>
      <svg viewBox="0 0 16 20"><path d="M10 1v18L0 10zM12 6h3v8h-3z" fill="#444"/></svg>
      <svg viewBox="0 0 16 20"><path d="M0 0l16 10L0 20z" fill="#444"/></svg>
      <svg viewBox="0 0 16 20"><path d="M6 1v18l10-9zM0 6h3v8H0z" fill="#444"/></svg>
      <svg viewBox="0 0 16 20"><path d="M0 0v20l12-10zM13 0h2v20h-2z" fill="#444"/></svg>
    </div>
    <div class="tl-track">
      <div class="tl-items">
        <svg class="ti"><use href="#t-cube"/></svg><svg class="ti"><use href="#t-sketch"/></svg><svg class="ti"><use href="#t-extrude"/></svg><svg class="ti"><use href="#t-sketch"/></svg><svg class="ti"><use href="#t-extrude"/></svg><svg class="ti"><use href="#t-fillet"/></svg><svg class="ti"><use href="#t-fillet"/></svg><svg class="ti"><use href="#t-cube"/></svg><svg class="ti"><use href="#t-sketch"/></svg><svg class="ti"><use href="#t-extrude"/></svg><svg class="ti"><use href="#t-fillet"/></svg><svg class="ti"><use href="#t-combine"/></svg><svg class="ti"><use href="#t-mirror"/></svg><svg class="ti"><use href="#t-mirror"/></svg><svg class="ti"><use href="#t-sketch"/></svg><svg class="ti"><use href="#t-extrude"/></svg><svg class="ti"><use href="#t-joint"/></svg><svg class="ti"><use href="#t-mirror"/></svg>
        <span class="ti-wrap"><svg class="ti"><use href="#t-cube"/></svg><i class="hatch"></i></span><span class="ti-wrap"><svg class="ti"><use href="#t-combine"/></svg><i class="hatch"></i></span>
        <svg class="ti"><use href="#t-fillet"/></svg><svg class="ti"><use href="#t-fillet"/></svg><svg class="ti"><use href="#t-fillet"/></svg><svg class="ti"><use href="#t-fillet"/></svg><svg class="ti"><use href="#t-fillet"/></svg>
        <svg class="ti ti-off"><use href="#t-sketch"/></svg><svg class="ti ti-off"><use href="#t-extrude"/></svg><svg class="ti ti-off"><use href="#t-sketch"/></svg><svg class="ti ti-off"><use href="#t-extrude"/></svg><svg class="ti ti-off"><use href="#t-fillet"/></svg><svg class="ti ti-off"><use href="#t-fillet"/></svg>
      </div>
      <div class="ruler"></div>
      <svg class="marker" viewBox="0 0 16 50"><path d="M0 0h16v8l-6 8v34H6V16L0 8z" fill="#5c5c5c"/></svg>
    </div>
    <svg class="tl-gear" viewBox="0 0 20 20"><circle cx="10" cy="10" r="5.5" fill="none" stroke="#4d4d4d" stroke-width="4"/><circle cx="10" cy="10" r="8.5" fill="none" stroke="#4d4d4d" stroke-width="3" stroke-dasharray="3.4 3.27"/></svg>
  </footer>
  <div class="taskbar"></div>
</div>
</body>
</html>
```

FILE: styles.css
```css
* { box-sizing: border-box; }
html, body { margin: 0; padding: 0; width: 1920px; height: 1080px; overflow: hidden; background: #ececec; }
body { font-family: "Liberation Sans", Arial, sans-serif; color: #555; }
.defs { position: absolute; }
svg { display: block; flex: none; }
i { display: block; font-style: normal; }

.app { width: 1920px; height: 1080px; display: flex; flex-direction: column; filter: blur(.5px); }

/* title bar */
.titlebar { height: 29px; background: #fff; display: flex; align-items: center; padding-left: 6px; flex: none; }
.logo { width: 17px; height: 18px; margin-top: -2px; }
.apptitle { margin-left: 5px; font-size: 14px; color: #7a7a7a; letter-spacing: .2px; }
.winctl { margin-left: auto; display: flex; gap: 45px; padding-right: 25px; }
.winctl svg { width: 14px; height: 14px; }

/* quick access */
.quickbar { height: 37px; background: #d8d8d8; border-bottom: 2px solid #a6a6a6; display: flex; align-items: center; padding-left: 15px; color: #4a4a4a; flex: none; }
.q-grid { width: 22px; height: 22px; }
.q-file { width: 18px; height: 24px; margin-left: 33px; }
.q-arr { width: 9px; height: 6px; margin-left: 6px; }
.q-arr-off { color: #8d8d8d; }
.q-save { width: 21px; height: 22px; margin-left: 30px; }
.q-undo { width: 22px; height: 18px; margin-left: 29px; }
.q-redo { width: 22px; height: 18px; margin-left: 19px; }
.q-right { margin-left: auto; display: flex; align-items: center; padding-right: 16px; }
.q-chat { width: 20px; height: 21px; }
.q-clock { width: 21px; height: 21px; margin-left: 30px; }
.q-count { font-size: 13px; margin-left: 3px; color: #555; }
.q-user { font-size: 13.5px; margin-left: 44px; color: #4a4a4a; }
.q-arr-user { margin-left: 6.5px; }
.q-help { width: 20px; height: 20px; border-radius: 50%; background: #555; color: #eee; font-weight: bold; font-size: 15px; line-height: 20px; text-align: center; margin-left: 31px; }
.q-arr-last { margin-left: 5px; }

/* tabs */
.tabs { height: 29px; background: #d8d8d8; border-bottom: 2px solid #a8a8a8; display: flex; position: relative; flex: none; }
.tab { height: 27px; display: flex; align-items: center; flex: none; }
.tab-on { width: 249px; background: #ececec; padding-left: 12px; }
.tab-off { width: 249px; border-left: 2px solid #ababab; border-right: 2px solid #ababab; padding-left: 12px; color: #a5a5a5; }
.tab-ico { width: 21px; height: 20px; }
.tab-ico2 { width: 20px; height: 20px; }
.tab-name { font-size: 15px; margin: 2px 0 0 12px; font-weight: bold; color: #6a6a6a; }
.tab-off .tab-name { font-weight: normal; color: #a5a5a5; margin-left: 12px; font-size: 15.5px; }
.tab-dot { width: 11px; height: 11px; border-radius: 50%; border: 2px solid #86d3bd; margin-left: 38px; }
.tab-off .tab-dot { margin-left: 13px; }
.tab-x { width: 12px; height: 12px; margin-left: 11px; }
.tab-caret { position: absolute; right: 8px; top: 8px; width: 16px; height: 10px; }

/* work area */
.work { position: relative; flex: 1; display: flex; flex-direction: column; background: #ececec; min-height: 0; }
.model { position: absolute; left: 0; top: 0; width: 1920px; height: 985px; }

/* ribbon */
.ribbon { position: relative; width: 1564px; height: 75px; margin: 4px 0 0 5px; background: #dcdcdc; display: flex; flex: none; }
.model-btn { width: 134px; background: #a9a9a9; display: flex; align-items: center; color: #f0f0f0; font-size: 13.5px; font-weight: bold; flex: none; padding-top: 2px; }
.grip { width: 7px; height: 36px; margin-left: 7px; border-left: 2px solid #8f8f8f; border-right: 2px solid #8f8f8f; }
.model-label { margin-left: 28px; }
.arr-w { width: 9px; height: 6px; margin-left: 6px; color: #f0f0f0; }
.sep { width: 2px; height: 63px; margin-top: 6px; background: #cdcdcd; flex: none; }
.rg { display: flex; flex-direction: column; align-items: center; flex: none; padding-top: 9px; }
.rg-sketch { width: 273px; }
.rg-create { width: 167px; }
.rg-modify { width: 275px; }
.rg-assemble { width: 113px; }
.rg-construct { width: 167px; }
.rg-inspect { width: 90px; }
.rg-insert { width: 78px; }
.rg-make { width: 72px; }
.rg-addins { width: 90px; }
.rg-select { width: 87px; }
.rg-icons { display: flex; gap: 14px; height: 40px; align-items: center; }
.rg-modify .rg-icons, .rg-create .rg-icons, .rg-construct .rg-icons { gap: 13.5px; }
.rg-assemble .rg-icons { gap: 15px; }
.ri { width: 40px; height: 40px; }
.rg-active { position: relative; background: #4f83b3; width: 49px; height: 49px; margin-top: -4px; margin-bottom: -5px; justify-content: center; border-radius: 1px; }
.sigma { width: 40px; height: 40px; font: bold 48px/40px "Liberation Serif", serif; color: #000; text-align: center; }
.rg-label { display: flex; align-items: center; gap: 3px; height: 14px; margin-top: 7px; font-size: 13px; color: #5f6670; white-space: nowrap; }
.arr { width: 7px; height: 5px; color: #444; }

/* side column */
.side { flex: 1; width: 375px; margin: 6px 0 6px 5px; display: flex; flex-direction: column; position: relative; min-height: 0; }
.pane-head { height: 30px; background: #d2d2d2; border: 1px solid #ababab; display: flex; align-items: center; flex: none; }
.rew { width: 14px; height: 10px; margin-left: 5px; }
.pane-title { margin-left: 14px; font-size: 12.5px; color: #6f6f6f; }
.pane-comments .pane-title { margin-left: 33px; font-size: 12px; }
.pane-round { width: 11px; height: 11px; margin-left: auto; border-radius: 50%; background: #222; color: #eee; font: bold 11px/10px "Liberation Sans", sans-serif; text-align: center; flex: none; }
.pane-grip { width: 4px; height: 14px; margin: 0 1px 0 9px; border-left: 1px solid #999; border-right: 1px solid #999; }

.tree { list-style: none; margin: 7px 0 0; padding: 0; flex: 1; min-height: 0; }
.node { display: flex; align-items: center; height: 25px; margin-bottom: 5px; margin-left: 45px; }
.root { margin-left: 21px; }
.tw-root { width: 15px; height: 14px; margin-right: 9px; }
.tw { width: 12px; height: 14px; margin-right: 10px; }
.lab-root { height: 25px; width: 225px; background: #c8c8c8; display: flex; align-items: center; padding-left: 2px; }
.lab-root-in { width: 192px; height: 20px; background: #868686; display: flex; align-items: center; padding-left: 5px; color: #f4f4f4; font-size: 13px; font-weight: bold; letter-spacing: .5px; }
.lab-root-in span { margin-left: 18px; }
.comp { width: 20px; height: 20px; margin-left: 14px; }
.radio { width: 16px; height: 16px; margin-left: 5px; }
.lab { height: 25px; background: #c8c8c8; display: flex; align-items: center; padding: 0 12px 0 3px; font-size: 13px; color: #666; letter-spacing: .2px; white-space: nowrap; position: relative; }
.lab .bulb { margin-left: 3px; }
.bulb { width: 14px; height: 18px; }
.fold { width: 20px; height: 17px; margin-left: 15px; }
.fold-a { margin: 0 0 0 1px; }
.gear { width: 19px; height: 19px; margin-left: 2px; }
.txt { margin-left: 18px; }
.txt-a { margin-left: 18px; }
.squiggle { position: absolute; left: 30px; right: 3px; bottom: 1px; height: 3px; background: repeating-linear-gradient(115deg, #5b7fb8 0 2px, transparent 2px 5px); }

.pane-comments { margin-top: auto; height: 31px; }

/* view cube */
.cube { position: absolute; left: 1770px; top: 25px; width: 150px; height: 110px; }
.cube-x { font-size: 19px; fill: #f08088; }
.cube-z { font-size: 19px; fill: #8f8ff2; }
.cube-t { font-size: 11px; fill: #7d7d7d; }

/* 3D print */
.print { position: absolute; left: 1347px; top: 497px; width: 312px; height: 328px; background: #dfdfdf; border: 1px solid #ababab; border-radius: 2px; display: flex; flex-direction: column; }
.print-head { height: 30px; background: #d0d0d0; border-bottom: 1px solid #b5b5b5; display: flex; align-items: center; padding-left: 6px; flex: none; }
.print-head .pane-round { margin-left: 0; }
.print-title { margin-left: 15px; margin-top: -2px; font-size: 12px; color: #7a736a; }
.print-body { flex: 1; margin-top: -1px; }
.row { height: 32.5px; display: flex; align-items: center; padding-left: 12px; font-size: 13px; color: #666; letter-spacing: .08px; }
.row-off { color: #b3b3b3; }
.rl { width: 151px; flex: none; white-space: nowrap; }
.sel-btn { width: 28px; height: 29px; background: #4f83b3; border-radius: 2px; display: flex; justify-content: center; align-items: center; }
.sel-btn svg { width: 14px; height: 20px; }
.chk { width: 17px; height: 17px; margin-left: 3px; border: 1.5px solid #666; border-radius: 3px; background: linear-gradient(#ececec, #c9c9c9); }
.rv { font-size: 12px; margin-left: 2px; }
.drop { width: 131px; height: 28px; background: #c6c6c6; display: flex; align-items: center; padding-left: 7px; justify-content: space-between; padding-right: 8px; color: #666; }
.arr-d { width: 8px; height: 5px; color: #333; }
.grp { height: 32.5px; display: flex; align-items: center; padding-left: 2px; font-size: 13.5px; color: #666; letter-spacing: .55px; }
.grp-arr { width: 9px; height: 12px; margin-right: 7px; }
.grp-down { width: 11px; height: 8px; margin-right: 5px; }
.print-foot { height: 45px; background: #d2d2d2; border-top: 1px solid #b8b8b8; display: flex; align-items: center; padding-left: 15px; flex: none; }
.info { width: 16px; height: 16px; border-radius: 50%; background: #111; color: #fff; font: bold 13px/16px "Liberation Serif", serif; text-align: center; }
.btn { width: 74px; height: 23px; margin-left: 14px; background: #ececec; border: 1px solid #c4c4c4; text-align: center; font-size: 15px; line-height: 21px; color: #6b6b6b; }
.btn-ok { margin-left: 96px; color: #7b7b7b; }

/* nav bar */
.navbar { position: absolute; left: 806px; top: 888px; display: flex; gap: 8px; }
.nav-group { width: 181px; height: 30px; background: #cecece; display: flex; align-items: center; padding-left: 3px; }
.nav-b { width: 117px; padding-left: 6px; }
.nv { width: 21px; height: 24px; }
.nv-a { width: 7px; height: 5px; margin: 0 5px 0 2px; color: #333; }
.nv-a-wide { margin: 0 8px 0 4px; }
.nv-a-last { margin: 0 0 0 6px; }
.nv-a-b1 { margin-right: 6px; }
.nv-a-b2 { margin-right: 9px; }
.nv-pan { margin-left: 14px; }
.nv-zoom { margin-left: 10px; }
.phone { position: absolute; left: 1837px; top: 895px; font-size: 13.5px; font-weight: bold; color: #555; }

/* timeline */
.timeline { height: 60px; background: #cacaca; border-top: 1px solid #d6d6d6; display: flex; position: relative; flex: none; }
.tl-ctrl { display: flex; gap: 15.7px; padding: 19px 0 0 13px; width: 177px; flex: none; }
.tl-ctrl svg { width: 15.5px; height: 20px; }
.tl-track { position: relative; width: 930px; height: 58px; padding-top: 18px; flex: none; }
.tl-items { display: flex; height: 24px; }
.ti { width: 30px; height: 24px; }
.ti-off { opacity: .22; }
.ti-wrap { position: relative; width: 30px; height: 24px; display: block; flex: none; }
.hatch { position: absolute; left: 5px; top: -9px; width: 19px; height: 6px; background: repeating-linear-gradient(120deg, #444 0 3px, transparent 3px 7px); }
.ruler { position: absolute; left: 15px; top: 44px; width: 902px; height: 8px; border-bottom: 2px solid #666; background: repeating-linear-gradient(90deg, #666 0 2px, transparent 2px 30px); }
.marker { position: absolute; left: 742px; top: 13px; width: 16px; height: 39px; }
.tl-gear { position: absolute; right: 11px; top: 20px; width: 19px; height: 19px; }
.taskbar { height: 2px; background: #222; flex: none; }
```
